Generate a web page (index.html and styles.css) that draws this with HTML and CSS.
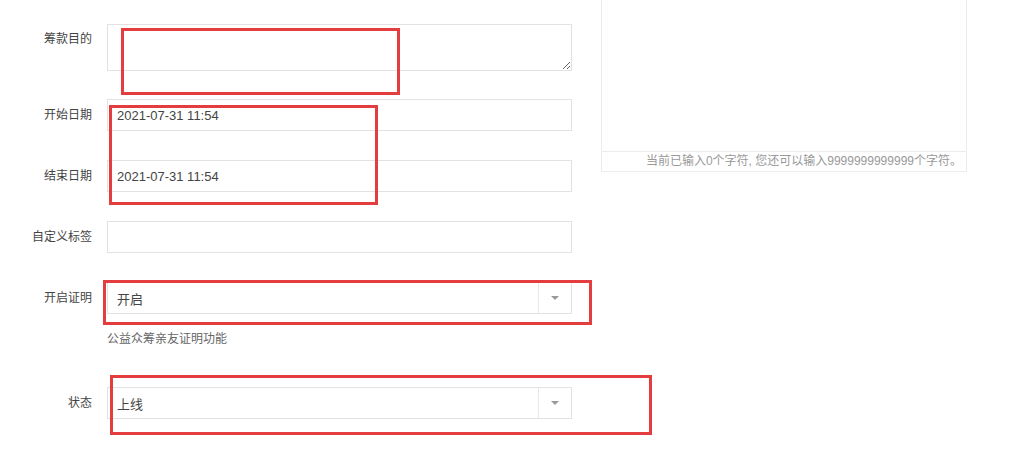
FILE: index.html
```html
<!DOCTYPE html>
<html lang="zh-CN">
<head>
  <meta charset="UTF-8" />
  <meta name="viewport" content="width=device-width, initial-scale=1.0" />
  <title>筹款设置</title>
  <link rel="stylesheet" href="styles.css">
</head>
<body>
  <div class="page">
    <form class="form">
      <div class="row row-top">
        <label class="label">筹款目的</label>
        <textarea class="field area"></textarea>
      </div>
      <div class="row">
        <label class="label">开始日期</label>
        <input class="field" type="text" value="2021-07-31 11:54" />
      </div>
      <div class="row">
        <label class="label">结束日期</label>
        <input class="field" type="text" value="2021-07-31 11:54" />
      </div>
      <div class="row">
        <label class="label">自定义标签</label>
        <input class="field" type="text" value="" />
      </div>
      <div class="row row-hint">
        <label class="label">开启证明</label>
        <div class="select">
          <span class="select-text">开启</span>
          <span class="select-arrow"></span>
        </div>
        <p class="hint">公益众筹亲友证明功能</p>
      </div>
      <div class="row">
        <label class="label">状态</label>
        <div class="select">
          <span class="select-text">上线</span>
          <span class="select-arrow"></span>
        </div>
      </div>
    </form>

    <div class="editor">
      <div class="editor-body"></div>
      <div class="editor-count">当前已输入0个字符, 您还可以输入9999999999999个字符。</div>
    </div>

    <!-- annotation frames -->
    <div class="mark mark-1"></div>
    <div class="mark mark-2"></div>
    <div class="mark mark-3"></div>
    <div class="mark mark-4"></div>
  </div>
</body>
</html>
```

FILE: styles.css
```css
body {
  margin: 0;
  background: #fff;
  font-family: "Liberation Sans", Arial, "Noto Sans CJK SC", sans-serif;
  color: #333;
  overflow: hidden;
}
.page {
  position: relative;
  display: flex;
  align-items: flex-start;
  height: 464px;
}
.form {
  width: 572px;
  padding-top: 24px;
}
.row {
  display: grid;
  grid-template-columns: 92px 465px;
  column-gap: 15px;
  align-items: center;
  margin-bottom: 29px;
}
.row-top {
  align-items: start;
  margin-bottom: 28px;
}
.row-top .label {
  padding-top: 6px;
}
.row-hint {
  margin-bottom: 39px;
}
.label {
  font-size: 12px;
  line-height: 18px;
  text-align: right;
  color: #444;
}
.field {
  box-sizing: border-box;
  width: 465px;
  height: 32px;
  margin: 0;
  padding: 0 9px;
  border: 1px solid #e2e2e2;
  background: #fff;
  font-family: "Liberation Sans", Arial, "Noto Sans CJK SC", sans-serif;
  font-size: 13px;
  color: #444;
  outline: none;
}
.area {
  height: 47px;
  padding: 6px 9px;
  resize: vertical;
  display: block;
}
.select {
  box-sizing: border-box;
  width: 465px;
  height: 32px;
  display: flex;
  align-items: center;
  border: 1px solid #e2e2e2;
  background: #fff;
}
.select-text {
  flex: 1;
  padding-left: 9px;
  font-size: 13px;
  color: #444;
}
.select-arrow {
  width: 32px;
  height: 100%;
  border-left: 1px solid #e8e8e8;
  display: flex;
  align-items: center;
  justify-content: center;
}
.select-arrow::after {
  content: "";
  border-left: 4px solid transparent;
  border-right: 4px solid transparent;
  border-top: 4px solid #999;
}
.hint {
  grid-column: 2;
  margin: 16px 0 0;
  font-size: 12px;
  line-height: 18px;
  color: #666;
}
.editor {
  box-sizing: border-box;
  width: 366px;
  height: 173px;
  margin: -1px 0 0 29px;
  border: 1px solid #ececec;
  display: flex;
  flex-direction: column;
}
.editor-body {
  height: 151px;
}
.editor-count {
  flex: 1;
  border-top: 1px solid #ececec;
  padding-right: 4px;
  text-align: right;
  font-size: 12px;
  line-height: 19px;
  color: #999;
}
.mark {
  position: absolute;
  border: 3px solid #e43d40;
  box-sizing: border-box;
  pointer-events: none;
}
.mark-1 { left: 121px; top: 28px; width: 279px; height: 67px; }
.mark-2 { left: 109px; top: 105px; width: 269px; height: 100px; }
.mark-3 { left: 103px; top: 280px; width: 489px; height: 45px; }
.mark-4 { left: 110px; top: 375px; width: 542px; height: 60px; }
```
